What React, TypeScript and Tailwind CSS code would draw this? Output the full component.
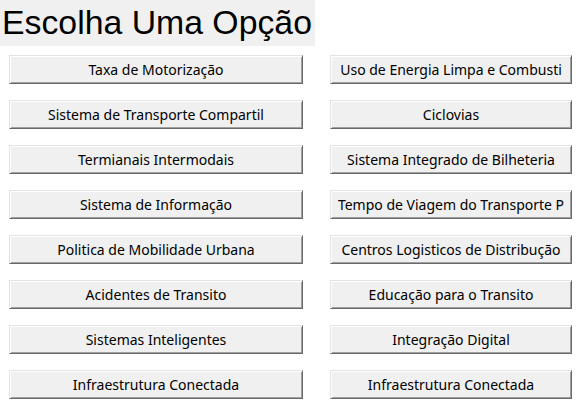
import React from "react";

const left = [
  "Taxa de Motorização",
  "Sistema de Transporte Compartil",
  "Termianais Intermodais",
  "Sistema de Informação",
  "Politica de Mobilidade Urbana",
  "Acidentes de Transito",
  "Sistemas Inteligentes",
  "Infraestrutura Conectada",
];

const right = [
  "Uso de Energia Limpa e Combusti",
  "Ciclovias",
  "Sistema Integrado de Bilheteria",
  "Tempo de Viagem do Transporte P",
  "Centros Logisticos de Distribução",
  "Educação para o Transito",
  "Integração Digital",
  "Infraestrutura Conectada",
];

const OptionButton: React.FC<{ label: string }> = ({ label }) => (
  <button className="h-[29px] w-full bg-[#f0f0f0] border border-[#e3e3e3] border-r-[#696969] border-b-[#696969] shadow-[inset_1px_1px_0_#ffffff,inset_-1px_-1px_0_#a0a0a0] text-[14px] text-black font-['Noto_Sans',sans-serif] whitespace-nowrap overflow-hidden">
    {label}
  </button>
);

const App: React.FC = () => {
  return (
    <div className="w-[582px] h-[412px] bg-white overflow-hidden">
      <div className="w-[315px] h-[46px] bg-[#f0f0f0] pl-[2px] flex items-center text-[33.8px] leading-none text-black font-['Liberation_Sans',sans-serif]">
        Escolha Uma Opção
      </div>
      <div className="flex gap-x-[27px] pl-[9px] pt-[9px]">
        <div className="w-[294px] flex flex-col gap-y-[16px]">
          {left.map((l, i) => (
            <OptionButton key={i} label={l} />
          ))}
        </div>
        <div className="w-[242px] flex flex-col gap-y-[16px]">
          {right.map((l, i) => (
            <OptionButton key={i} label={l} />
          ))}
        </div>
      </div>
    </div>
  );
};

export default App;
